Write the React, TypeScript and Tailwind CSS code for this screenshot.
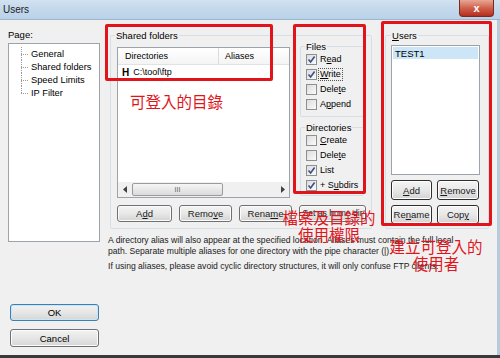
import React from "react";

const Check = ({ checked }: { checked?: boolean }) => (
  <span className="w-[11px] h-[11px] border border-[#8e8f8f] bg-gradient-to-br from-[#dcdcdc] to-[#fbfbfb] flex items-center justify-center shrink-0">
    {checked && (
      <svg width="9" height="9" viewBox="0 0 9 9">
        <path d="M1.5 4.5 L3.6 7 L7.6 1.5" fill="none" stroke="#3b4f8c" strokeWidth="1.6" />
      </svg>
    )}
  </span>
);

const CheckRow = ({ checked, children, focus }: { checked?: boolean; children: React.ReactNode; focus?: boolean }) => (
  <div className="h-[15px] flex items-center gap-[2px] pl-[5px]">
    <Check checked={checked} />
    <span className={focus ? "outline outline-1 outline-dotted outline-[#555] px-[1px]" : "px-[1px]"}>{children}</span>
  </div>
);

const Btn = ({ children, w, h, dark }: { children: React.ReactNode; w: string; h: string; dark?: boolean }) => (
  <div
    className={`${w} ${h} rounded-[3px] border ${dark ? "border-[#2e2e2e] shadow-[inset_0_0_0_1px_#ffffff]" : "border-[#707070] shadow-[inset_0_0_0_1px_#fcfcfc]"} bg-gradient-to-b from-[#f4f4f4] via-[#e8e8e8] to-[#d3d3d3] flex items-center justify-center shrink-0 whitespace-nowrap text-[#1a1a1a]`}
  >
    {children}
  </div>
);

const TreeItem = ({ label, last }: { label: string; last?: boolean }) => (
  <div className="h-[13px] flex items-center">
    <div className="ml-[12px] w-[7px] h-full flex flex-col">
      <div className="h-1/2 border-l border-dotted border-[#9a9a9a]" />
      <div className={`h-1/2 border-t border-dotted border-[#9a9a9a] ${last ? "" : "border-l"}`} />
    </div>
    <span className="ml-[3px] text-[9.3px] leading-[12px]">{label}</span>
  </div>
);

export default function App() {
  return (
    <div className="w-[500px] h-[358px] relative overflow-hidden bg-[#f0f0f0] font-['Liberation_Sans',_Arial,_sans-serif] text-[9px] leading-[11px] text-black">
      {/* title bar */}
      <div className="h-[20px] flex items-start justify-between bg-gradient-to-b from-[#d2e2f1] via-[#c3d8ec] to-[#bad2e9] border-b border-[#9eb6cc]">
        <span className="pl-[3px] pt-[4px] text-[10px] leading-[12px] text-[#1b1b1b]">Users</span>
        <div className="mr-[6px] w-[35px] h-[17px] rounded-b-[4px] border border-t-0 border-[#7b2a22] bg-gradient-to-b from-[#e6a795] via-[#d0604b] to-[#b42c1c] flex items-center justify-center text-white font-bold text-[11px] leading-[11px]">
          x
        </div>
      </div>

      {/* body */}
      <div className="h-[335px] flex border-r-[3px] border-[#b8c9d9]">
        {/* left column */}
        <div className="ml-[8px] w-[92px] flex flex-col pt-[9px]">
          <span className="text-[9.5px] leading-[11px]">Page:</span>
          <div className="mt-[3px] h-[199px] border border-[#9da3aa] bg-white pt-[3px]">
            <TreeItem label="General" />
            <TreeItem label="Shared folders" />
            <TreeItem label="Speed Limits" />
            <TreeItem label="IP Filter" last />
          </div>
          <div className="mt-[62px] ml-[2px] w-[89px] h-[17px] rounded-[3px] border border-[#3c7fb1] shadow-[inset_0_0_0_1px_#c8e6f8] bg-gradient-to-b from-[#f2f2f2] via-[#e6e6e6] to-[#d6d6d6] flex items-center justify-center text-[9.5px]">
            OK
          </div>
          <div className="mt-[8px] ml-[2px] w-[89px] h-[18px] rounded-[3px] border border-[#707070] shadow-[inset_0_0_0_1px_#fcfcfc] bg-gradient-to-b from-[#f2f2f2] via-[#e6e6e6] to-[#d6d6d6] flex items-center justify-center text-[9.5px]">
            Cancel
          </div>
        </div>

        {/* right column */}
        <div className="ml-[8px] flex flex-col pt-[10px]">
          <div className="flex gap-[13px]">
            {/* Shared folders */}
            <fieldset className="ml-[2px] w-[262px] border border-[#d5dfe5] rounded-[2px] pl-[6px] pb-[6px]">
              <legend className="-ml-[2px] px-[1px] leading-[11px] text-[9.5px]">Shared folders</legend>
              <div className="flex gap-[10px]">
                <div className="mt-[6px] w-[173px] h-[151px] border border-[#9da3aa] bg-white flex flex-col">
                  <div className="h-[17px] flex border-b border-[#e2e2e2] bg-gradient-to-b from-[#ffffff] to-[#f4f4f4]">
                    <div className="w-[101px] border-r border-[#dcdcdc] pl-[7px] flex items-center">Directories</div>
                    <div className="pl-[6px] flex items-center">Aliases</div>
                  </div>
                  <div className="h-[14px] flex items-center pl-[4px] gap-[4px]">
                    <span className="font-bold text-[10px]">H</span>
                    <span>C:\tool\ftp</span>
                  </div>
                  <div className="flex-1" />
                  <div className="h-[15px] flex items-center bg-[#f0f0f0] px-[1px] gap-[1px]">
                    <div className="w-[12px] h-[13px] flex items-center justify-center">
                      <svg width="5" height="7" viewBox="0 0 5 7"><path d="M4 0 L0 3.5 L4 7 Z" fill="#404040" /></svg>
                    </div>
                    <div className="w-[91px] h-[13px] rounded-[2px] border border-[#9a9a9a] bg-gradient-to-b from-[#f6f6f6] to-[#dadada] flex items-center justify-center text-[7px] leading-[7px] text-[#666]">
                      III
                    </div>
                    <div className="flex-1" />
                    <div className="w-[12px] h-[13px] flex items-center justify-center">
                      <svg width="5" height="7" viewBox="0 0 5 7"><path d="M1 0 L5 3.5 L1 7 Z" fill="#404040" /></svg>
                    </div>
                  </div>
                </div>

                <div className="flex flex-col w-[64px]">
                  <fieldset className="border border-[#d5dfe5] rounded-[2px] pb-[4px]">
                    <legend className="ml-[4px] px-[1px] leading-[11px] text-[9.5px]">Files</legend>
                    <CheckRow checked>R<u>e</u>ad</CheckRow>
                    <CheckRow checked focus><u>W</u>rite</CheckRow>
                    <CheckRow>Dele<u>t</u>e</CheckRow>
                    <CheckRow>A<u>p</u>pend</CheckRow>
                  </fieldset>
                  <fieldset className="mt-[5px] border border-[#d5dfe5] rounded-[2px] pb-[2px]">
                    <legend className="ml-[4px] px-[1px] leading-[11px] text-[9.5px]">Directories</legend>
                    <CheckRow><u>C</u>reate</CheckRow>
                    <CheckRow>Dele<u>t</u>e</CheckRow>
                    <CheckRow checked>List</CheckRow>
                    <CheckRow checked>+ S<u>u</u>bdirs</CheckRow>
                  </fieldset>
                </div>
              </div>
              <div className="mt-[7px] flex gap-[7px] text-[9.5px]">
                <Btn w="w-[55px]" h="h-[17px]">A<u>d</u>d</Btn>
                <Btn w="w-[53px]" h="h-[17px]">Remo<u>v</u>e</Btn>
                <Btn w="w-[53px]" h="h-[17px]">Rena<u>m</u>e</Btn>
                <Btn w="w-[67px]" h="h-[17px]"><span className="text-[8.6px]">Set as home dir</span></Btn>
              </div>
            </fieldset>

            {/* Users */}
            <fieldset className="w-[104px] border border-[#d5dfe5] rounded-[2px] pl-[5px] pb-[4px]">
              <legend className="px-[1px] leading-[11px] text-[9.5px]"><u>U</u>sers</legend>
              <div className="mt-[4px] w-[89px] h-[130px] border border-[#9da3aa] bg-white p-[1px]">
                <div className="h-[12px] bg-[#cce6f7] pl-[2px] flex items-center text-[9.5px]">TEST1</div>
              </div>
              <div className="mt-[5px] flex gap-[5px] text-[9.5px]">
                <Btn w="w-[41px]" h="h-[20px]" dark><u>A</u>dd</Btn>
                <Btn w="w-[42px]" h="h-[20px]" dark><u>R</u>emove</Btn>
              </div>
              <div className="mt-[5px] flex gap-[5px] text-[9.5px]">
                <Btn w="w-[41px]" h="h-[19px]" dark>Re<u>n</u>ame</Btn>
                <Btn w="w-[42px]" h="h-[19px]" dark>Cop<u>y</u></Btn>
              </div>
            </fieldset>
          </div>

          <div className="mt-[6px] text-[8.6px] leading-[11px] text-[#1a1a1a]">
            <p>A directory alias will also appear at the specified location. Aliases must contain the full local</p>
            <p>path. Separate multiple aliases for one directory with the pipe character (|).</p>
            <p className="mt-[4px]">If using aliases, please avoid cyclic directory structures, it will only confuse FTP clients.</p>
          </div>
        </div>
      </div>
      <div className="h-[3px] bg-[#3a3a3a]" />

      {/* red annotation boxes */}
      <div className="absolute left-[105px] top-[24px] w-[168px] h-[57px] border-[3px] border-[#e2141b] rounded-[2px]" />
      <div className="absolute left-[293px] top-[24px] w-[73px] h-[170px] border-[3px] border-[#e2141b] rounded-[2px]" />
      <div className="absolute left-[381px] top-[21px] w-[111px] h-[205px] border-[3px] border-[#e2141b] rounded-[2px]" />

      {/* red annotation texts */}
      <div className="absolute left-[130px] top-[91px] text-[#e2141b] text-[15.5px] leading-[20px] font-['Noto_Sans_CJK_TC',_sans-serif]">
        可登入的目錄
      </div>
      <div className="absolute left-[282px] top-[209px] w-[94px] text-center text-[#e2141b] text-[15.5px] leading-[17px] font-['Noto_Sans_CJK_TC',_sans-serif]">
        檔案及目錄的<br />使用權限
      </div>
      <div className="absolute left-[389px] top-[238px] w-[94px] text-center text-[#e2141b] text-[15.5px] leading-[17px] font-['Noto_Sans_CJK_TC',_sans-serif]">
        建立可登入的<br />使用者
      </div>
    </div>
  );
}
